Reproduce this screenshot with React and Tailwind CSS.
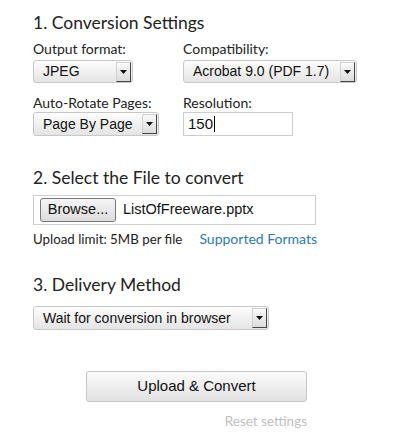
import React from "react";

const labelFont = { fontFamily: "Lato, 'Open Sans', sans-serif" };

function Arrow() {
  return (
    <div className="ml-auto mr-[1px] flex h-[20px] w-[15px] items-center justify-center border border-t-[#d0d0d0] border-l-[#d0d0d0] border-r-[#444] border-b-[#444] bg-gradient-to-b from-[#fafafa] to-[#dcdcdc]">
      <svg width="7" height="4" viewBox="0 0 7 4">
        <polygon points="0,0 7,0 3.5,4" fill="#111" />
      </svg>
    </div>
  );
}

function Select({ text, className }) {
  return (
    <div
      className={
        "flex items-center rounded-[3px] border border-[#c8c8c8] bg-gradient-to-b from-[#fdfdfd] to-[#e4e4e4] pl-[9px] text-[14px] text-[#111] font-['Liberation_Sans',Arial,sans-serif] " +
        className
      }
    >
      <span>{text}</span>
      <Arrow />
    </div>
  );
}

export default function App() {
  return (
    <div className="w-[394px] h-[446px] bg-white pl-[33px] pt-[11px] text-[#222]" style={labelFont}>
      <h2 className="text-[17.5px] leading-[24px] text-[#222]">1. Conversion Settings</h2>

      <div className="mt-[6px] grid grid-cols-[150px_1fr]">
        <div>
          <div className="text-[14px] leading-[16px]">Output format:</div>
          <Select text="JPEG" className="mt-[3px] h-[23px] w-[100px]" />
        </div>
        <div>
          <div className="text-[14px] leading-[16px]">Compatibility:</div>
          <Select text="Acrobat 9.0 (PDF 1.7)" className="mt-[3px] h-[23px] w-[174px]" />
        </div>
      </div>

      <div className="mt-[12px] grid grid-cols-[150px_1fr]">
        <div>
          <div className="text-[14px] leading-[16px]">Auto-Rotate Pages:</div>
          <Select text="Page By Page" className="mt-[1px] h-[24px] w-[126px]" />
        </div>
        <div>
          <div className="text-[14px] leading-[16px]">Resolution:</div>
          <div className="mt-[1px] flex h-[24px] w-[110px] items-center border border-[#cccccc] pl-[4px] text-[15px] text-[#111] font-['Liberation_Sans',Arial,sans-serif]">
            <span>150</span>
            <span className="ml-[1px] h-[16px] w-[1px] bg-black" />
          </div>
        </div>
      </div>

      <h2 className="mt-[30px] text-[17.5px] leading-[24px] text-[#222]">2. Select the File to convert</h2>

      <div className="mt-[5px] flex h-[30px] w-[283px] items-center border border-[#cfcfcf] pl-[6px]">
        <button className="flex h-[24px] w-[76px] items-center justify-center rounded-[3px] border border-[#777] bg-gradient-to-b from-[#f6f6f6] to-[#dcdcdc] text-[14.5px] text-[#111] font-['Liberation_Sans',Arial,sans-serif]">
          Browse...
        </button>
        <span className="ml-[7px] text-[14.5px] text-[#111] font-['Liberation_Sans',Arial,sans-serif]">ListOfFreeware.pptx</span>
      </div>

      <div className="mt-[5px] flex items-baseline leading-[18px]">
        <span className="text-[13.3px] text-[#222]">Upload limit: 5MB per file</span>
        <span className="ml-[17px] text-[14px] text-[#2a7ab8]">Supported Formats</span>
      </div>

      <h2 className="mt-[25px] text-[17.5px] leading-[24px] text-[#222]">3. Delivery Method</h2>

      <Select text="Wait for conversion in browser" className="mt-[9px] h-[24px] w-[236px]" />

      <div className="mt-[41px] flex w-[274px] flex-col items-end">
        <button className="flex h-[31px] w-[221px] items-center justify-center rounded-[3px] border border-[#c6c6c6] bg-gradient-to-b from-[#fbfbfb] to-[#e2e2e2] text-[15px] text-[#111] font-['Liberation_Sans',Arial,sans-serif]">
          Upload &amp; Convert
        </button>
        <div className="mt-[10px] text-[13.5px] leading-[18px] text-[#c0c0c0]">Reset settings</div>
      </div>
    </div>
  );
}
